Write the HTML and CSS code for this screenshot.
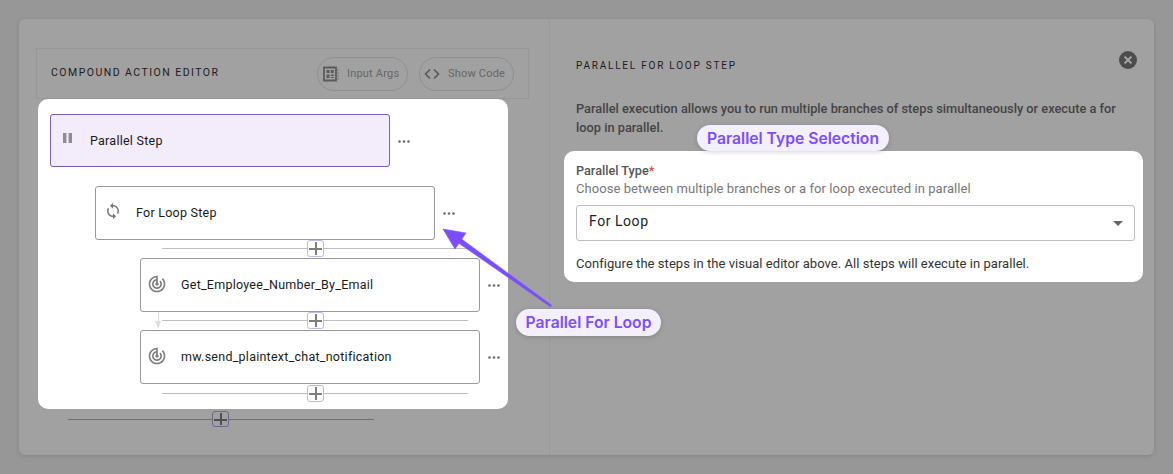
FILE: index.html
```html
<!DOCTYPE html>
<html lang="en">
<head>
<meta charset="utf-8">
<title>Parallel For Loop Step</title>
<link rel="stylesheet" href="styles.css">
</head>
<body>
<main class="panel">
  <section class="left">
    <header class="editor-head">
      <h2 class="eyebrow">COMPOUND ACTION EDITOR</h2>
      <div class="head-actions">
        <button class="pill pill-args">
          <svg class="pill-icon" viewBox="0 0 16 16"><path d="M1 1.5h12v13H1z" fill="none" stroke="#5c5c5c" stroke-width="1.8"/><path d="M3.5 4h3v3h-3zM7.8 4h3v3h-3zM3.5 8.5h3v3.5h-3zM7.8 8.5h3v1.5h-3zM7.8 11h3v1h-3z" fill="#5c5c5c"/><path d="M14 4h2M14 7h2M14 10h2M14 13h2" stroke="#777" stroke-width="1"/></svg>
          <span>Input Args</span>
        </button>
        <button class="pill pill-code">
          <svg class="pill-icon" viewBox="0 0 16 16"><path d="M6 3.5 1.5 8 6 12.5M10 3.5 14.5 8 10 12.5" fill="none" stroke="#555" stroke-width="1.5"/></svg>
          <span>Show Code</span>
        </button>
      </div>
    </header>
    <div class="canvas-card">
      <div class="row">
        <div class="node node-active">
          <svg class="node-icon" viewBox="0 0 14 14"><path d="M2 1h3.4v10H2zM7.6 1H11v10H7.6z" fill="#8c8c92"/></svg>
          <span>Parallel Step</span>
        </div>
        <svg class="dots" viewBox="0 0 12 3"><circle cx="1.5" cy="1.5" r="1.3"/><circle cx="6" cy="1.5" r="1.3"/><circle cx="10.5" cy="1.5" r="1.3"/></svg>
      </div>
      <div class="row row-loop">
        <div class="node">
          <svg class="node-icon node-icon-sync" viewBox="0 0 24 24"><path d="M12 4V1L8 5l4 4V6c3.31 0 6 2.69 6 6 0 1.01-.25 1.97-.7 2.8l1.46 1.46C19.54 15.03 20 13.57 20 12c0-4.42-3.58-8-8-8zm0 14c-3.31 0-6-2.69-6-6 0-1.01.25-1.97.7-2.8L5.24 7.74C4.46 8.97 4 10.43 4 12c0 4.42 3.58 8 8 8v3l4-4-4-4v3z" fill="#777"/></svg>
          <span>For Loop Step</span>
        </div>
        <svg class="dots" viewBox="0 0 12 3"><circle cx="1.5" cy="1.5" r="1.3"/><circle cx="6" cy="1.5" r="1.3"/><circle cx="10.5" cy="1.5" r="1.3"/></svg>
      </div>
      <div class="connector conn-first"><span class="plus"></span></div>
      <div class="row row-step">
        <div class="node">
          <svg class="node-icon node-icon-radar" viewBox="0 0 24 24"><path d="M19.07 4.93l-1.41 1.41C19.1 7.79 20 9.79 20 12c0 4.42-3.58 8-8 8s-8-3.58-8-8c0-4.08 3.05-7.44 7-7.93v2.02C8.16 6.57 6 9.03 6 12c0 3.31 2.69 6 6 6s6-2.69 6-6c0-1.66-.67-3.16-1.76-4.24l-1.41 1.41C15.55 9.9 16 10.9 16 12c0 2.21-1.79 4-4 4s-4-1.79-4-4c0-1.86 1.28-3.41 3-3.86v2.14c-.6.35-1 .98-1 1.72 0 1.1.9 2 2 2s2-.9 2-2c0-.74-.4-1.38-1-1.72V2h-1C6.48 2 2 6.48 2 12s4.48 10 10 10 10-4.48 10-10c0-2.76-1.12-5.26-2.93-7.07z" fill="#808080"/></svg>
          <span>Get_Employee_Number_By_Email</span>
        </div>
        <svg class="dots" viewBox="0 0 12 3"><circle cx="1.5" cy="1.5" r="1.3"/><circle cx="6" cy="1.5" r="1.3"/><circle cx="10.5" cy="1.5" r="1.3"/></svg>
      </div>
      <div class="connector conn-mid">
        <span class="flow-arrow"></span>
        <span class="plus"></span>
      </div>
      <div class="row row-step">
        <div class="node">
          <svg class="node-icon node-icon-radar" viewBox="0 0 24 24"><path d="M19.07 4.93l-1.41 1.41C19.1 7.79 20 9.79 20 12c0 4.42-3.58 8-8 8s-8-3.58-8-8c0-4.08 3.05-7.44 7-7.93v2.02C8.16 6.57 6 9.03 6 12c0 3.31 2.69 6 6 6s6-2.69 6-6c0-1.66-.67-3.16-1.76-4.24l-1.41 1.41C15.55 9.9 16 10.9 16 12c0 2.21-1.79 4-4 4s-4-1.79-4-4c0-1.86 1.28-3.41 3-3.86v2.14c-.6.35-1 .98-1 1.72 0 1.1.9 2 2 2s2-.9 2-2c0-.74-.4-1.38-1-1.72V2h-1C6.48 2 2 6.48 2 12s4.48 10 10 10 10-4.48 10-10c0-2.76-1.12-5.26-2.93-7.07z" fill="#808080"/></svg>
          <span>mw.send_plaintext_chat_notification</span>
        </div>
        <svg class="dots" viewBox="0 0 12 3"><circle cx="1.5" cy="1.5" r="1.3"/><circle cx="6" cy="1.5" r="1.3"/><circle cx="10.5" cy="1.5" r="1.3"/></svg>
      </div>
      <div class="connector conn-last"><span class="plus"></span></div>
    </div>
    <div class="connector conn-outer"><span class="plus plus-dim"></span></div>
  </section>
  <section class="right">
    <div class="right-head">
      <h2 class="eyebrow eyebrow-right">PARALLEL FOR LOOP STEP</h2>
      <svg class="close" viewBox="0 0 18 18"><circle cx="9" cy="9" r="9" fill="#4d4d4d"/><path d="M5.6 5.6l6.8 6.8M12.4 5.6l-6.8 6.8" stroke="#a8a8a8" stroke-width="2"/></svg>
    </div>
    <p class="intro">Parallel execution allows you to run multiple branches of steps simultaneously or execute a for loop in parallel.</p>
    <div class="type-card">
      <div class="field-label">Parallel Type<span class="req">*</span></div>
      <div class="field-help">Choose between multiple branches or a for loop executed in parallel</div>
      <div class="select"><span>For Loop</span><span class="caret"></span></div>
      <p class="field-note">Configure the steps in the visual editor above. All steps will execute in parallel.</p>
    </div>
  </section>
</main>
<div class="callout callout-type">Parallel Type Selection</div>
<div class="callout callout-loop">Parallel For Loop</div>
<svg class="arrow" viewBox="0 0 120 90"><path d="M2 3 25 7 14 23ZM17.5 17 20.5 13 110.6 79.2 109.4 80.8Z" fill="#7c4dff" stroke="#7c4dff" stroke-width=".6" stroke-linejoin="round"/></svg>
</body>
</html>
```
FILE: styles.css
```css
* { box-sizing: border-box; }
html, body { margin: 0; height: 474px; overflow: hidden; }
body {
  position: relative;
  background: #979797;
  padding: 19px;
  font-family: Roboto, "Liberation Sans", sans-serif;
  color: #1d1d1d;
}
h2, p { margin: 0; }
.panel {
  display: flex;
  width: 1135px;
  height: 436px;
  background: #a1a1a1;
  border-radius: 6px;
  box-shadow: 0 1px 4px rgba(0, 0, 0, .12);
}
.left {
  width: 531px;
  padding: 29px 20px 0 17px;
  border-right: 1px solid #999;
}
.editor-head {
  display: flex;
  align-items: center;
  justify-content: space-between;
  height: 51px;
  padding: 0 14px 0 14px;
  border: 1px solid #979797;
}
.eyebrow {
  font-size: 10.5px;
  font-weight: 400;
  letter-spacing: 1.47px;
  color: #1c1c1c;
  position: relative;
  top: -1px;
}
.head-actions { display: flex; gap: 11px; }
.pill {
  display: flex;
  align-items: center;
  height: 34px;
  padding: 0;
  border: 1px solid #8f8f8f;
  border-radius: 17px;
  background: transparent;
  font: 400 11px Roboto, sans-serif;
  letter-spacing: .2px;
  color: #666;
}
.pill-args { width: 91px; padding-left: 5px; gap: 8px; }
.pill-code { width: 95px; padding-left: 4px; gap: 8px; }
.pill-icon { width: 16px; height: 16px; flex: none; }
.canvas-card {
  width: 470px;
  height: 310px;
  margin: 0 0 0 2px;
  padding: 15px 0 0 12px;
  background: #fff;
  border-radius: 10px;
  position: relative;
}
.row { display: flex; align-items: center; }
.row-loop { margin: 19px 0 0 45px; }
.row-step { margin-left: 90px; }
.node {
  display: flex;
  align-items: center;
  width: 340px;
  height: 54px;
  padding: 0 0 2px 40px;
  position: relative;
  border: 1px solid #999;
  border-radius: 3px;
  background: #fff;
  font-size: 12.5px;
  letter-spacing: .25px;
  color: #1a1a1a;
}
.node-active { height: 53px; padding: 0 0 0 39px; background: #f2ecfb; border-color: #7c5cba; }
.node-icon {
  position: absolute;
  left: 10px;
  top: 17px;
  width: 14px;
  height: 14px;
}
.node-icon-sync { left: 7.5px; top: 14.5px; width: 18px; height: 18px; }
.node-icon-radar { left: 5.5px; top: 14.5px; width: 20px; height: 20px; }
.dots {
  flex: none;
  width: 12px;
  height: 3px;
  margin: 1px 0 0 8px;
  fill: #6a6a6a;
}
.connector { position: relative; height: 18px; }
.connector::before {
  content: "";
  position: absolute;
  height: 1px;
  background: #bdbdbd;
  top: 8px;
}
.conn-first::before, .conn-mid::before, .conn-last::before { left: 112px; width: 306px; }
.conn-last::before { top: 9px; }
.plus {
  position: absolute;
  left: 257px;
  top: 0;
  width: 17px;
  height: 17px;
  border: 1px solid #c4b5e6;
  border-radius: 3px;
  background: #fff;
}
.conn-last .plus { top: 1px; }
.plus::before, .plus::after {
  content: "";
  position: absolute;
  background: #7d7d7d;
}
.plus::before { left: 1px; right: 1px; top: 6.5px; height: 2px; }
.plus::after { top: 1px; bottom: 1px; left: 6.5px; width: 2px; }
.flow-arrow {
  position: absolute;
  left: 108px;
  top: 0;
  width: 1px;
  height: 11px;
  background: #ddd;
}
.flow-arrow::after {
  content: "";
  position: absolute;
  left: -3px;
  top: 9px;
  border: 3.5px solid transparent;
  border-top: 8px solid #ddd;
  border-bottom: 0;
}
.conn-outer { width: 470px; margin-top: 1px; }
.conn-outer::before { left: 32px; width: 306px; background: #6f6f6f; top: 9px; }
.plus-dim {
  left: 176px;
  top: 1px;
  width: 17px;
  height: 16px;
  background: #a1a1a1;
  border-color: #6d6690;
}
.plus-dim::before, .plus-dim::after { background: #4f4f4f; }
.right { flex: 1; padding: 32px 11px 0 14px; }
.right-head {
  display: flex;
  align-items: flex-start;
  justify-content: space-between;
  height: 49px;
  padding-left: 12px;
}
.eyebrow-right { font-size: 10px; letter-spacing: 1.78px; top: 9px; }
.close { width: 18px; height: 18px; margin-right: 6px; }
.intro {
  padding: 0 12px;
  font-size: 12.8px;
  font-weight: 500;
  line-height: 19px;
  color: #444;
  height: 52px;
  margin-top: -1px;
}
.type-card {
  width: 579px;
  height: 131px;
  padding: 12px 8px 0 12px;
  background: #fff;
  border-radius: 10px;
}
.field-label { font-size: 12.7px; font-weight: 500; color: #555; line-height: 16px; }
.req { color: #d9534f; }
.field-help { font-size: 13px; color: #777; line-height: 18px; letter-spacing: .06px; margin-top: 1px; }
.select {
  display: flex;
  align-items: center;
  justify-content: space-between;
  height: 36px;
  margin-top: 7px;
  padding: 0 12px 4px;
  border: 1px solid #bdbdbd;
  border-radius: 3px;
  font-size: 14px;
  letter-spacing: .55px;
  color: #222;
}
.caret {
  border: 5px solid transparent;
  border-top: 5px solid #666;
  border-bottom: 0;
  margin-right: -1px;
  margin-top: 4px;
}
.field-note { font-size: 13px; color: #333; line-height: 16px; margin-top: 15px; letter-spacing: .05px; }
.callout {
  position: absolute;
  display: flex;
  align-items: center;
  justify-content: center;
  background: #f3effd;
  color: #7c4dff;
  font-family: Inter, Roboto, sans-serif;
  font-size: 15.7px;
  font-weight: 600;
  border-radius: 14px;
  box-shadow: 0 1px 5px rgba(0, 0, 0, .18);
  white-space: nowrap;
}
.callout-type { left: 697px; top: 125px; width: 192px; height: 26px; }
.callout-loop { left: 516px; top: 309px; width: 145px; height: 27px; }
.arrow { position: absolute; left: 441px; top: 226px; width: 120px; height: 90px; }
```
